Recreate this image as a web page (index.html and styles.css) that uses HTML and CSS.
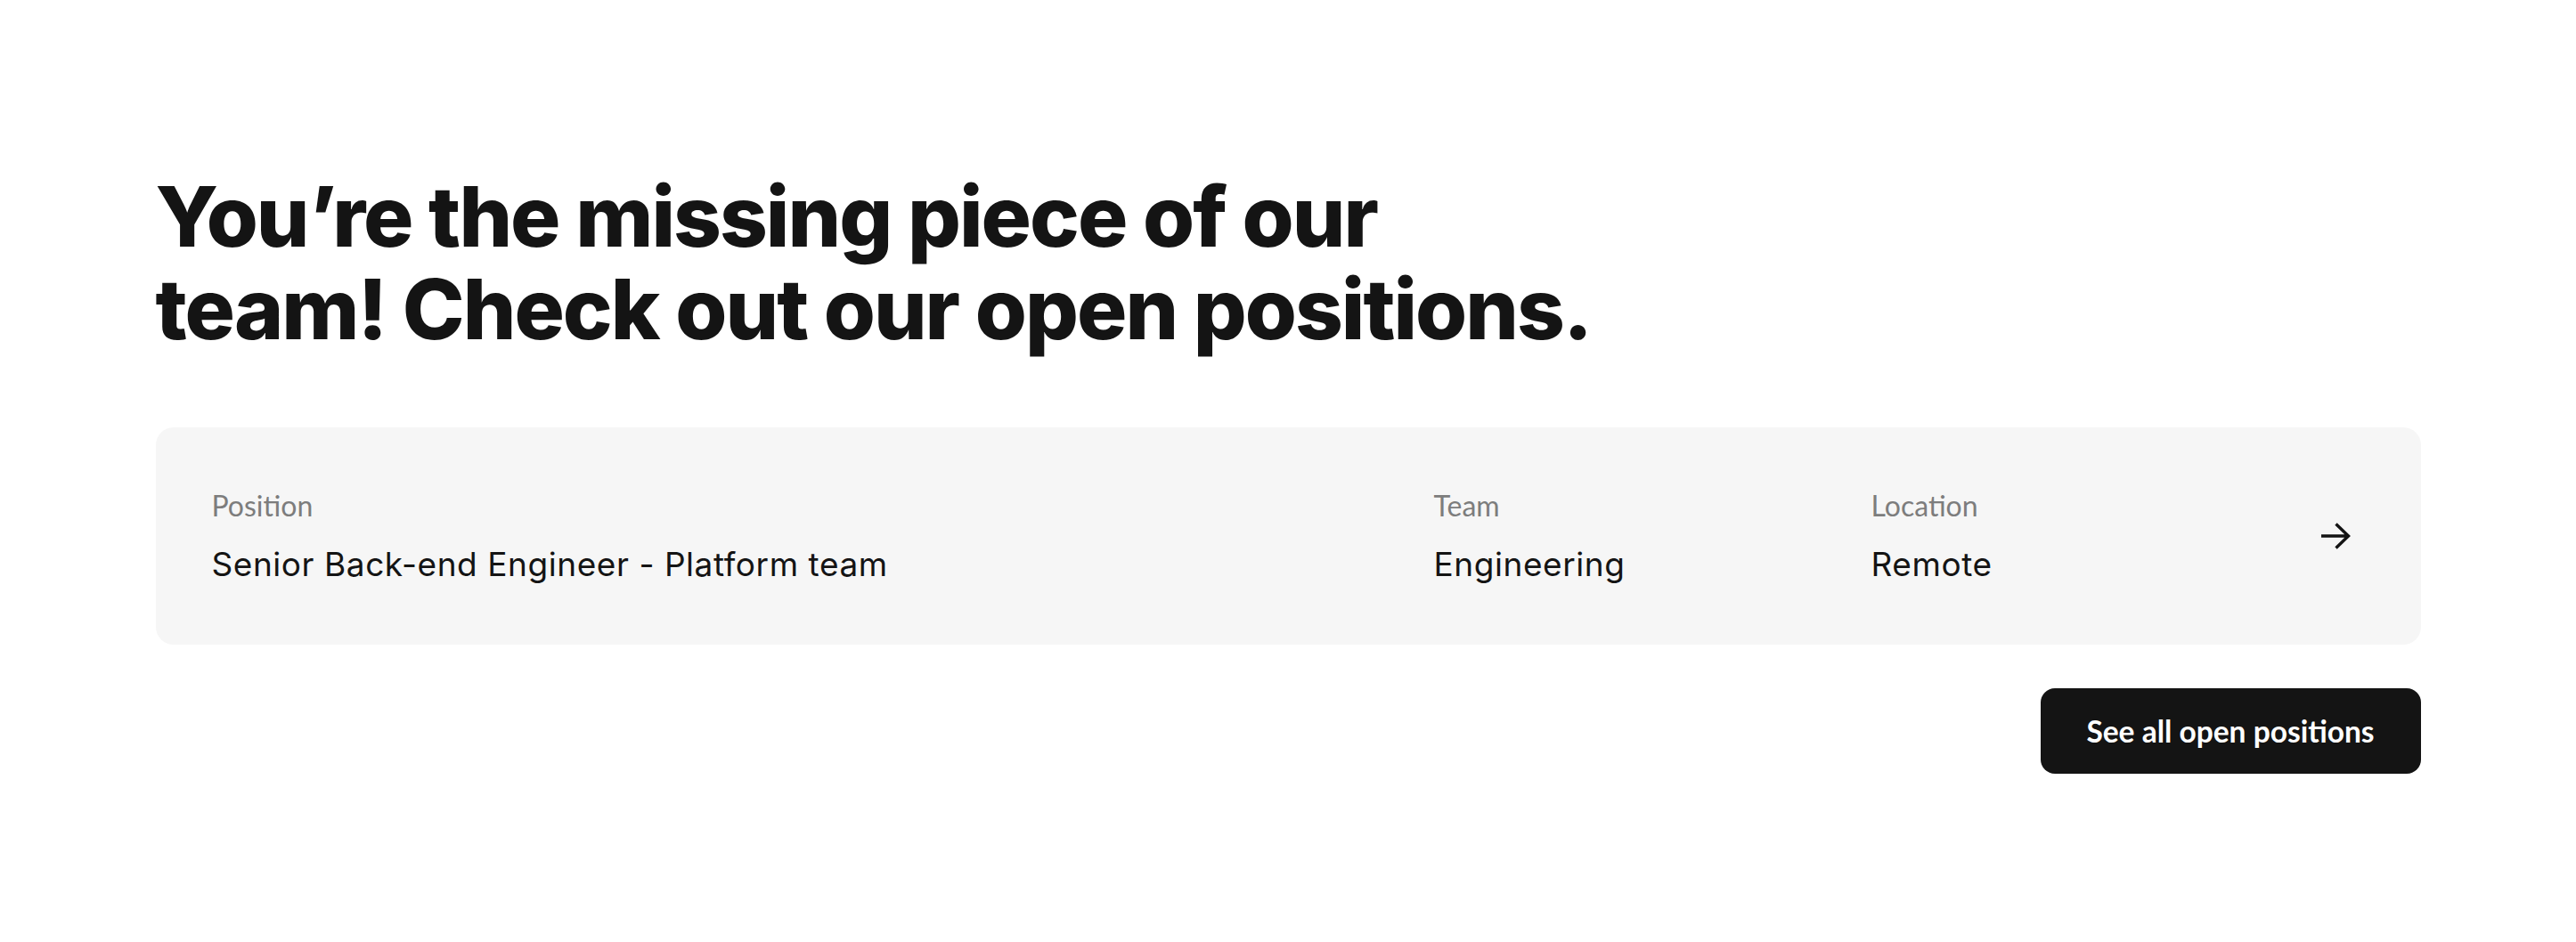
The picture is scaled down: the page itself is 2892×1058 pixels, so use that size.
FILE: index.html
```html
<!DOCTYPE html>
<html lang="en">
<head>
<meta charset="utf-8">
<title>Open positions</title>
<link rel="stylesheet" href="styles.css">
</head>
<body>
<section class="careers">
  <h1 class="title">You’re the missing piece of our<br>team! Check out our open positions.</h1>
  <a class="job" href="#">
    <div class="field">
      <span class="label">Position</span>
      <span class="value">Senior Back-end Engineer - Platform team</span>
    </div>
    <div class="field">
      <span class="label">Team</span>
      <span class="value">Engineering</span>
    </div>
    <div class="field">
      <span class="label">Location</span>
      <span class="value">Remote</span>
    </div>
    <svg class="arrow" width="34" height="30" viewBox="0 0 34 30" aria-hidden="true">
      <path d="M1 15 H32 M17.5 1.5 L31.5 15 L17.5 28.5" fill="none" stroke="#141414" stroke-width="3.4" stroke-linecap="butt" stroke-linejoin="miter"/>
    </svg>
  </a>
  <div class="actions">
    <a class="btn" href="#">See all open positions</a>
  </div>
</section>
</body>
</html>
```

FILE: styles.css
```css
* { box-sizing: border-box; }
html, body { margin: 0; padding: 0; background: #ffffff; }
body { font-family: "Lato", "Liberation Sans", sans-serif; color: #141414; }

.careers {
  width: 2543px;
  margin: 0 auto;
  padding-top: 191px;
}

.title {
  margin: 0 0 81px 0;
  font-family: "Inter", "Liberation Sans", sans-serif;
  font-weight: 800;
  font-size: 94px;
  line-height: 104px;
  letter-spacing: -0.021em;
  color: #141414;
}

.job {
  display: grid;
  grid-template-columns: 1372px 491px 1fr auto;
  align-items: center;
  padding: 64px 79px 64px 63px;
  background: #f6f6f6;
  border-radius: 20px;
  text-decoration: none;
  color: inherit;
}

.field {
  display: flex;
  flex-direction: column;
  gap: 16px;
}

.label {
  font-size: 32px;
  line-height: 48px;
  color: #7d7d7d;
}

.value {
  font-family: "Inter", "Liberation Sans", sans-serif;
  font-size: 37px;
  line-height: 52px;
  letter-spacing: 0.015em;
  color: #141414;
}

.arrow { display: block; }

.actions {
  display: flex;
  justify-content: flex-end;
  margin-top: 49px;
}

.btn {
  display: flex;
  align-items: center;
  justify-content: center;
  width: 427px;
  height: 96px;
  background: #141414;
  color: #ffffff;
  border-radius: 16px;
  font-size: 33.5px;
  font-weight: 700;
  text-decoration: none;
}
```
